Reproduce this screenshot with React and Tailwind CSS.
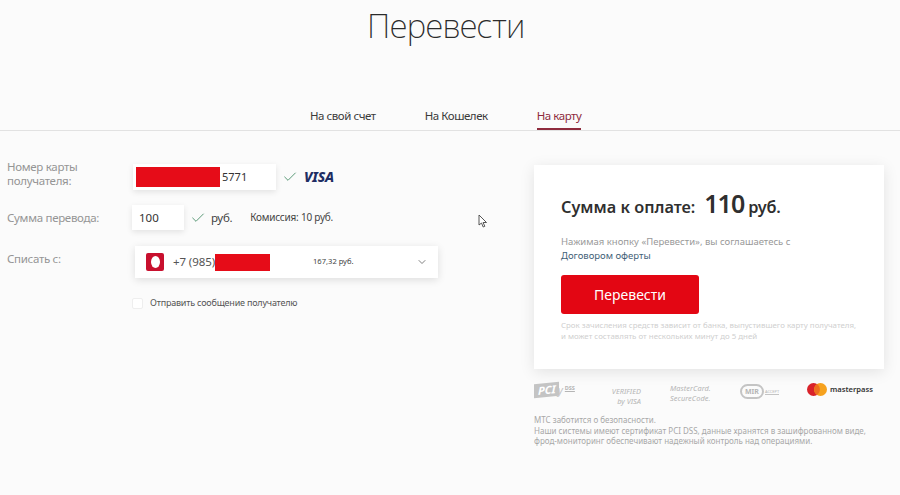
import { ChevronDown, Check } from "lucide-react";

const font = { fontFamily: '"Noto Sans", "Open Sans", sans-serif' };

function Redact({ className }) {
  return <div className={`bg-[#e60c18] ${className}`} />;
}

function Tab({ label, active }) {
  return (
    <div className={`h-[29px] text-[11.5px] leading-[29px] tracking-[-0.45px] ${active ? "text-[#8e2b3d] border-b-2 border-[#8e2b3d]" : "text-[#3a3a3a]"}`}>
      {label}
    </div>
  );
}

function Logos() {
  return (
    <div className="flex items-start h-[26px] text-[#b5b5b5]">
      <div className="w-[73px] flex items-center">
        <span className="bg-[#c4c4c4] text-white text-[11px] italic font-bold leading-[14px] pl-[4px] pr-[3px] -skew-y-6">PCI</span>
        <span className="text-[#c4c4c4] text-[11px] italic leading-[14px] -ml-[1px]">y</span>
        <span className="ml-[2px] -mt-[3px] text-[5.5px] font-bold underline">DSS</span>
      </div>
      <div className="w-[63px] text-[7.4px] leading-[10px] italic text-right pr-[29px] whitespace-nowrap mt-[3px]">
        VERIFIED<br />by VISA
      </div>
      <div className="w-[70px] text-[7.4px] leading-[10px] italic tracking-[0.05px] whitespace-nowrap">
        MasterCard.<br />SecureCode.
      </div>
      <div className="w-[67px] flex items-center mt-[1px]">
        <span className="border-2 border-[#c4c4c4] rounded-full text-[7px] font-bold leading-[11px] px-[3px]">MIR</span>
        <span className="text-[4px] ml-[1px] border-b border-[#c4c4c4] leading-[5px]">ACCEPT</span>
      </div>
      <div className="flex items-center">
        <svg width="20" height="13" viewBox="0 0 20 13">
          <circle cx="6.5" cy="6.5" r="6.5" fill="#d9222a" />
          <circle cx="13.5" cy="6.5" r="6.5" fill="#f6a21e" />
          <path d="M10 1.1a6.5 6.5 0 0 1 0 10.8a6.5 6.5 0 0 1 0-10.8z" fill="#ee6f1f" />
        </svg>
        <span className="ml-[3px] text-[7.6px] font-semibold text-[#333]">masterpass</span>
      </div>
    </div>
  );
}

export default function App() {
  return (
    <div className="w-[900px] h-[495px] overflow-hidden bg-[#fbfbfb] relative" style={font}>
      {/* Header */}
      <h1 className="h-[101px] pt-[2px] pr-[8px] text-center text-[33px] leading-[48px] font-extralight text-[#2b2b2b] tracking-[-0.5px]">Перевести</h1>
      <div className="h-[30px] border-b border-[#e2e2e2] flex pl-[310px] gap-[49px]">
        <Tab label="На свой счет" />
        <Tab label="На Кошелек" />
        <Tab label="На карту" active />
      </div>

      <div className="flex pt-[33px]">
        {/* Form */}
        <div className="w-[534px] pl-[7px] flex flex-col">
          <div className="flex items-center h-[26px]">
            <div className="w-[126px] text-[11.5px] leading-[14px] tracking-[-0.3px] text-[#959595] -mt-[7px]">Номер карты<br />получателя:</div>
            <div className="w-[143px] h-[26px] bg-white shadow-[0_2px_6px_rgba(0,0,0,0.1)] flex items-center pl-[3px] text-[11px] text-[#333]">
              <Redact className="w-[84px] h-[20px]" />
              <span className="ml-[2px]">5771</span>
            </div>
            <Check size={16} strokeWidth={1.5} className="ml-[6px] text-[#5b9a78]" />
            <span className="ml-[6px] -mt-[1px] text-[14px] font-extrabold italic text-[#1f2d63] tracking-[-0.2px]">VISA</span>
          </div>

          <div className="flex items-center h-[25px] mt-[15px]">
            <div className="w-[125px] text-[11.5px] tracking-[-0.3px] text-[#959595]">Сумма перевода:</div>
            <div className="w-[52px] h-[25px] bg-white shadow-[0_2px_6px_rgba(0,0,0,0.1)] flex items-center pl-[7px] text-[11.5px] text-[#333]">100</div>
            <Check size={16} strokeWidth={1.5} className="ml-[6px] text-[#5b9a78]" />
            <span className="ml-[5px] text-[11.5px] tracking-[-0.3px] text-[#444]">руб.</span>
            <span className="ml-[18px] text-[10px] tracking-[-0.22px] text-[#444]">Комиссия: 10 руб.</span>
          </div>

          <div className="flex items-start h-[32px] mt-[16px]">
            <div className="w-[128px] text-[11.5px] tracking-[-0.3px] leading-[26px] text-[#959595]">Списать с:</div>
            <div className="w-[303px] h-[32px] bg-white shadow-[0_2px_8px_rgba(0,0,0,0.12)] flex items-center pl-[11px] pr-[10px]">
              <div className="w-[18px] h-[18px] bg-[#c8102e] rounded-[2px] flex items-center justify-center">
                <div className="w-[9px] h-[12px] bg-white rounded-[50%]" />
              </div>
              <span className="ml-[9px] text-[11.5px] tracking-[-0.1px] text-[#555]">+7 (985)</span>
              <Redact className="w-[55px] h-[17px]" />
              <span className="ml-[43px] text-[7.6px] text-[#444]">167,32 руб.</span>
              <ChevronDown size={12} strokeWidth={1.5} className="ml-auto text-[#555]" />
            </div>
          </div>

          <div className="flex items-center h-[14px] mt-[18px] ml-[125px]">
            <div className="w-[11px] h-[11px] bg-white border border-[#eeeeee] rounded-[2px]" />
            <span className="ml-[7px] text-[9px] tracking-[-0.2px] text-[#555]">Отправить сообщение получателю</span>
          </div>
        </div>

        {/* Payment card */}
        <div className="w-[350px] pt-[1px]">
          <div className="h-[204px] bg-white shadow-[0_3px_14px_rgba(0,0,0,0.1)] px-[27px] pt-[22px]">
            <div className="flex items-baseline h-[32px] text-[#2f2f2f]">
              <span className="text-[16.3px] font-semibold">Сумма к оплате:</span>
              <span className="ml-[9px] text-[25px] tracking-[-1px] font-semibold leading-[32px]">110</span>
              <span className="ml-[4px] text-[16.3px] font-semibold tracking-[-0.2px]">руб.</span>
            </div>
            <p className="mt-[16px] text-[9.5px] leading-[13px] text-[#999]">Нажимая кнопку «Перевести», вы соглашаетесь с</p>
            <p className="text-[9.5px] leading-[13px] text-[#3f6177] pt-[1px]">Договором оферты</p>
            <button className="mt-[13px] block w-[138px] h-[39px] bg-[#e30613] rounded-[3px] text-white text-[14px]">Перевести</button>
            <p className="mt-[6px] text-[7.9px] leading-[11px] text-[#cfcfcf] whitespace-nowrap">
              Срок зачисления средств зависит от банка, выпустившего карту получателя,<br />
              и может составлять от нескольких минут до 5 дней
            </p>
          </div>
          <div className="mt-[14px]"><Logos /></div>
          <p className="mt-[6px] text-[8px] leading-[10.5px] text-[#a8a8a8]">
            МТС заботится о безопасности.<br />
            Наши системы имеют сертификат PCI DSS, данные хранятся в зашифрованном виде,<br />
            фрод-мониторинг обеспечивают надежный контроль над операциями.
          </p>
        </div>
      </div>

      {/* Mouse cursor */}
      <svg className="absolute left-[478px] top-[214px]" width="10" height="15" viewBox="0 0 10 15">
        <path d="M1 1v10l2.5-2 1.7 4 1.6-.7-1.7-3.8H8.5z" fill="#fff" stroke="#444" strokeWidth="0.9" />
      </svg>
    </div>
  );
}
